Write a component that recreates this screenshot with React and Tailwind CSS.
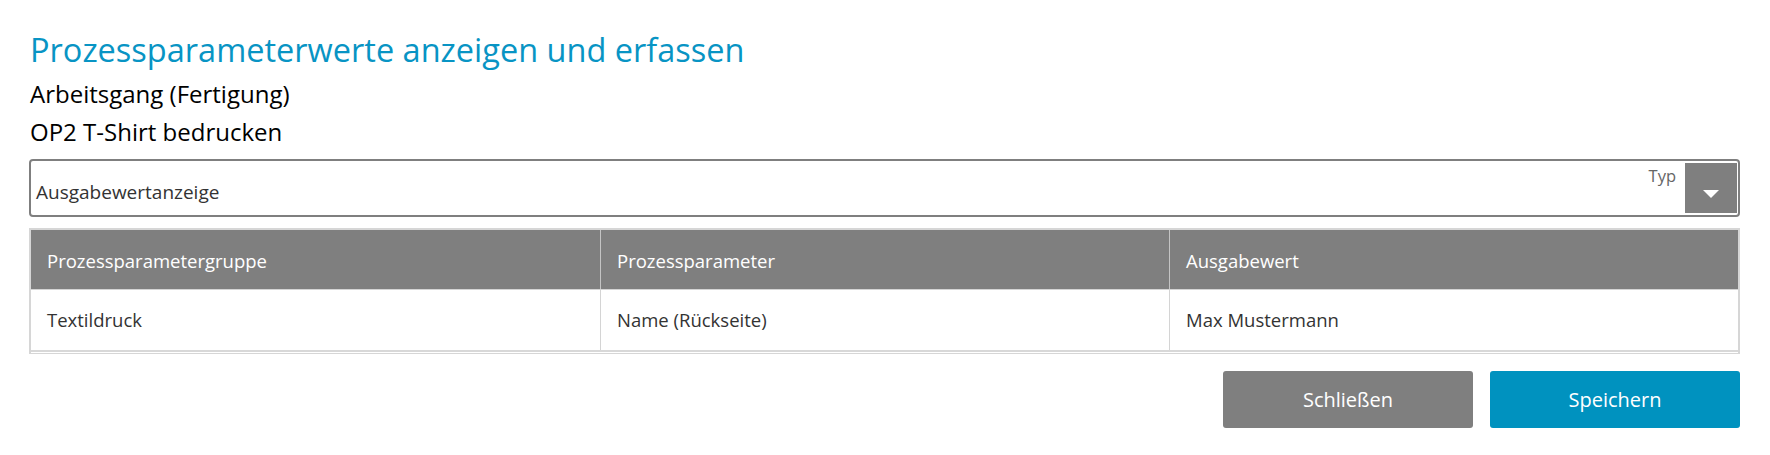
import React from 'react'

const columns = ['Prozessparametergruppe', 'Prozessparameter', 'Ausgabewert']
const rows = [['Textildruck', 'Name (Rückseite)', 'Max Mustermann']]

const App = () => {
    return (
        <div className="min-h-[455px] bg-white pl-[29px] pr-[30px] pt-[28px] font-['Open_Sans',sans-serif]">
            <h1 className="pl-[1px] text-[32.5px] leading-[44px] text-[#0894c4]">Prozessparameterwerte anzeigen und erfassen</h1>
            <div className="mt-[3px] pl-[1px] text-[24px] leading-[38px] text-black">Arbeitsgang (Fertigung)</div>
            <div className="pl-[1px] text-[24px] leading-[38px] text-black">OP2 T-Shirt bedrucken</div>

            {/* Typ select */}
            <div className="mt-[8px] flex rounded-[4px] border-2 border-[#7f7f7f] p-[2px] pr-[1px]">
                <div className="flex flex-1 items-end pb-[9px] pl-[3px] text-[19px] leading-[24px] text-[#333]">
                    Ausgabewertanzeige
                </div>
                <div className="mr-[9px] self-start pt-[3px] text-[16.5px] leading-[20px] text-[#666]">Typ</div>
                <button className="flex h-[50px] w-[52px] items-start justify-center bg-[#7f7f7f] pt-[27px]">
                    <svg width="16" height="8" viewBox="0 0 16 8">
                        <polygon points="0,0 16,0 8,8" fill="#fff" />
                    </svg>
                </button>
            </div>

            {/* table */}
            <div className="mt-[11px] border-2 border-[#d6d6d6] border-b-[1px] pb-[1px]">
                <div className="grid grid-cols-3 border-b border-[#d4d4d4] bg-[#7f7f7f]">
                    {columns.map((c, i) => (
                        <div
                            key={c}
                            className={`flex h-[59px] items-center pl-[16px] pt-[2px] text-[18.5px] text-white ${i > 0 ? 'border-l border-[#c4c4c4]' : ''}`}
                        >
                            {c}
                        </div>
                    ))}
                </div>
                {rows.map((r, ri) => (
                    <div key={ri} className="grid grid-cols-3 border-b-2 border-[#d8d8d8]">
                        {r.map((v, i) => (
                            <div
                                key={i}
                                className={`flex h-[60px] items-center pl-[16px] text-[18.5px] text-[#333] ${i > 0 ? 'border-l border-[#d4d4d4]' : ''}`}
                            >
                                {v}
                            </div>
                        ))}
                    </div>
                ))}
            </div>

            <div className="mt-[17px] flex justify-end gap-[17px]">
                <button className="h-[57px] w-[250px] rounded-[3px] bg-[#7f7f7f] text-[20px] text-white">Schließen</button>
                <button className="h-[57px] w-[250px] rounded-[3px] bg-[#0092bf] text-[20px] text-white">Speichern</button>
            </div>
        </div>
    )
}

export default App
